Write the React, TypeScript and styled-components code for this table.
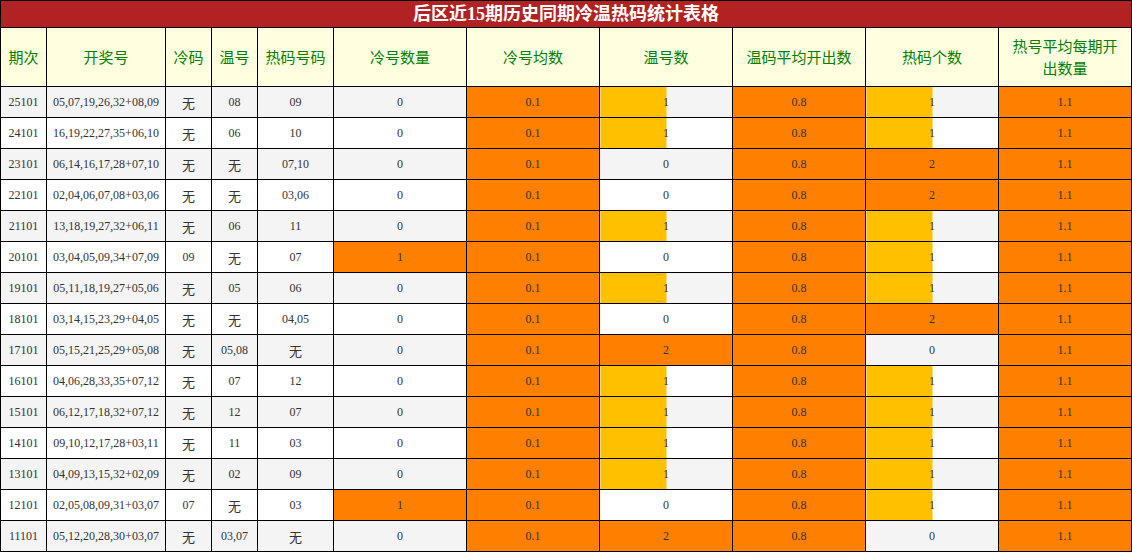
import styled, { createGlobalStyle } from "styled-components";

const GlobalStyle = createGlobalStyle`
    body {
        margin: 0;
        background: #ffffff;
        font-family: "Liberation Serif", "Noto Sans CJK SC", serif;
    }
`

type Row = {
    no: string;
    nums: string;
    cold: string;
    warm: string;
    hot: string;
    coldCount: number;
    warmCount: number;
    hotCount: number;
}

const rows: Row[] = [
    { no: "25101", nums: "05,07,19,26,32+08,09", cold: "无", warm: "08", hot: "09", coldCount: 0, warmCount: 1, hotCount: 1 },
    { no: "24101", nums: "16,19,22,27,35+06,10", cold: "无", warm: "06", hot: "10", coldCount: 0, warmCount: 1, hotCount: 1 },
    { no: "23101", nums: "06,14,16,17,28+07,10", cold: "无", warm: "无", hot: "07,10", coldCount: 0, warmCount: 0, hotCount: 2 },
    { no: "22101", nums: "02,04,06,07,08+03,06", cold: "无", warm: "无", hot: "03,06", coldCount: 0, warmCount: 0, hotCount: 2 },
    { no: "21101", nums: "13,18,19,27,32+06,11", cold: "无", warm: "06", hot: "11", coldCount: 0, warmCount: 1, hotCount: 1 },
    { no: "20101", nums: "03,04,05,09,34+07,09", cold: "09", warm: "无", hot: "07", coldCount: 1, warmCount: 0, hotCount: 1 },
    { no: "19101", nums: "05,11,18,19,27+05,06", cold: "无", warm: "05", hot: "06", coldCount: 0, warmCount: 1, hotCount: 1 },
    { no: "18101", nums: "03,14,15,23,29+04,05", cold: "无", warm: "无", hot: "04,05", coldCount: 0, warmCount: 0, hotCount: 2 },
    { no: "17101", nums: "05,15,21,25,29+05,08", cold: "无", warm: "05,08", hot: "无", coldCount: 0, warmCount: 2, hotCount: 0 },
    { no: "16101", nums: "04,06,28,33,35+07,12", cold: "无", warm: "07", hot: "12", coldCount: 0, warmCount: 1, hotCount: 1 },
    { no: "15101", nums: "06,12,17,18,32+07,12", cold: "无", warm: "12", hot: "07", coldCount: 0, warmCount: 1, hotCount: 1 },
    { no: "14101", nums: "09,10,12,17,28+03,11", cold: "无", warm: "11", hot: "03", coldCount: 0, warmCount: 1, hotCount: 1 },
    { no: "13101", nums: "04,09,13,15,32+02,09", cold: "无", warm: "02", hot: "09", coldCount: 0, warmCount: 1, hotCount: 1 },
    { no: "12101", nums: "02,05,08,09,31+03,07", cold: "07", warm: "无", hot: "03", coldCount: 1, warmCount: 0, hotCount: 1 },
    { no: "11101", nums: "05,12,20,28,30+03,07", cold: "无", warm: "03,07", hot: "无", coldCount: 0, warmCount: 2, hotCount: 0 },
]

const columns = [
    { title: "期次", width: 46 },
    { title: "开奖号", width: 119 },
    { title: "冷码", width: 46 },
    { title: "温号", width: 46 },
    { title: "热码号码", width: 76 },
    { title: "冷号数量", width: 133 },
    { title: "冷号均数", width: 133 },
    { title: "温号数", width: 133 },
    { title: "温码平均开出数", width: 133 },
    { title: "热码个数", width: 133 },
    { title: "热号平均每期开出数量", width: 133 },
]

const STable = styled.table`
    width: 1132px;
    border-collapse: collapse;
    table-layout: fixed;

    th, td {
        border: 1px solid #000;
    }
`

const STitle = styled.th`
    height: 26px;
    padding: 0;
    background-color: #b22222;
    color: #ffffff;
    font-size: 18px;
    font-weight: 700;
    line-height: 26px;
    text-align: center;
`

const SHead = styled.th<{ $wide: boolean }>`
    height: 58px;
    padding: ${p => (p.$wide ? "0 8px" : "0")};
    background-color: #ffffe0;
    color: #008000;
    font-family: "Noto Sans CJK SC", sans-serif;
    font-size: 15px;
    font-weight: 400;
    line-height: 22px;
    text-align: center;
    white-space: ${p => (p.$wide ? "normal" : "nowrap")};
`

const SRow = styled.tr<{ $odd: boolean }>`
    background-color: ${p => (p.$odd ? "#f4f4f4" : "#ffffff")};
`

const SCell = styled.td<{ $tone?: "orange" | "bar" | "none"; $fill?: number }>`
    height: 30px;
    padding: 0 2px;
    color: #333;
    font-size: 12px;
    text-align: center;
    white-space: nowrap;
    background: ${p =>
        p.$tone === "orange"
            ? "#ff8000"
            : p.$tone === "bar"
                ? `linear-gradient(to right, #ffc000 ${p.$fill}%, transparent ${p.$fill}%)`
                : "transparent"};

    .cn {
        font-family: "Noto Sans CJK SC", sans-serif;
        font-size: 13px;
    }
`

const Text = ({ value }: { value: string }) =>
    value === "无" ? <span className="cn">{value}</span> : <>{value}</>

const countCell = (value: number, max: number) => {
    if (value === 0) return <SCell>{value}</SCell>
    if (value >= max) return <SCell $tone="orange">{value}</SCell>
    return <SCell $tone="bar" $fill={(value / max) * 100}>{value}</SCell>
}

const App = () => {
    return (
        <>
            <GlobalStyle />
            <STable>
                <colgroup>
                    {columns.map(c => <col key={c.title} style={{ width: c.width }} />)}
                </colgroup>
                <thead>
                    <tr>
                        <STitle colSpan={11}>后区近15期历史同期冷温热码统计表格</STitle>
                    </tr>
                    <tr>
                        {columns.map(c => <SHead key={c.title} $wide={c.width > 100}>{c.title}</SHead>)}
                    </tr>
                </thead>
                <tbody>
                    {rows.map((r, i) => (
                        <SRow key={r.no} $odd={i % 2 === 0}>
                            <SCell>{r.no}</SCell>
                            <SCell>{r.nums}</SCell>
                            <SCell><Text value={r.cold} /></SCell>
                            <SCell><Text value={r.warm} /></SCell>
                            <SCell><Text value={r.hot} /></SCell>
                            {r.coldCount > 0 ? <SCell $tone="orange">{r.coldCount}</SCell> : <SCell>0</SCell>}
                            <SCell $tone="orange">0.1</SCell>
                            {countCell(r.warmCount, 2)}
                            <SCell $tone="orange">0.8</SCell>
                            {countCell(r.hotCount, 2)}
                            <SCell $tone="orange">1.1</SCell>
                        </SRow>
                    ))}
                </tbody>
            </STable>
        </>
    )
}

export default App;
